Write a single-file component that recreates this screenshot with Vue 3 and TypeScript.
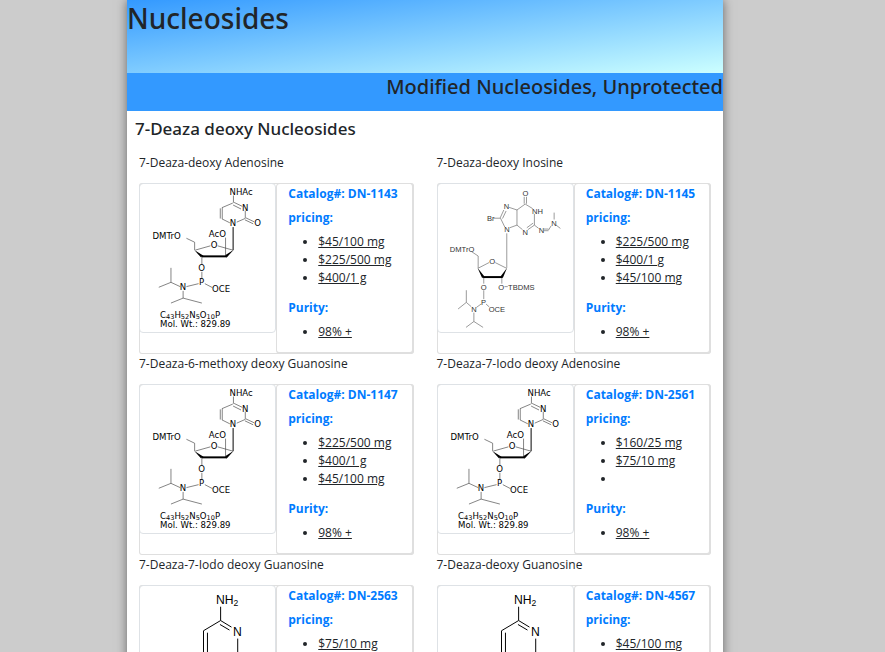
<script setup lang="ts">
type Structure = 'cytidine' | 'guanosine' | 'amine'

interface Product {
  name: string
  catalog: string
  structure: Structure
  prices: string[]
  purity: string
}

const products: Product[] = [
  { name: '7-Deaza-deoxy Adenosine', catalog: 'DN-1143', structure: 'cytidine', prices: ['$45/100 mg', '$225/500 mg', '$400/1 g'], purity: '98% +' },
  { name: '7-Deaza-deoxy Inosine', catalog: 'DN-1145', structure: 'guanosine', prices: ['$225/500 mg', '$400/1 g', '$45/100 mg'], purity: '98% +' },
  { name: '7-Deaza-6-methoxy deoxy Guanosine', catalog: 'DN-1147', structure: 'cytidine', prices: ['$225/500 mg', '$400/1 g', '$45/100 mg'], purity: '98% +' },
  { name: '7-Deaza-7-Iodo deoxy Adenosine', catalog: 'DN-2561', structure: 'cytidine', prices: ['$160/25 mg', '$75/10 mg', ''], purity: '98% +' },
  { name: '7-Deaza-7-Iodo deoxy Guanosine', catalog: 'DN-2563', structure: 'amine', prices: ['$75/10 mg'], purity: '98% +' },
  { name: '7-Deaza-deoxy Guanosine', catalog: 'DN-4567', structure: 'amine', prices: ['$45/100 mg'], purity: '98% +' },
]
</script>

<template>
  <div class="page">
    <main class="sheet">
      <header class="banner"><h1>Nucleosides</h1></header>
      <div class="band"><h2>Modified Nucleosides, Unprotected</h2></div>
      <h3>7-Deaza deoxy Nucleosides</h3>
      <div class="products">
        <article v-for="p in products" :key="p.catalog">
          <p class="name">{{ p.name }}</p>
          <div class="card">
            <div class="picture">
              <svg v-if="p.structure === 'cytidine'" viewBox="27 99 411 450">
                <g class="thin">
                  <path d="M311 134V156M309 157L276 171M313 155L338 167M310 163L334 175M277 171V205M271 173V204M276 205L300 217M321 215L346 204M347 204V180M349 202L374 214M346 208L371 220" />
                  <path d="M287 262V318M168 264L193 276V300M195 300L241 287M263 287L309 300M215 320V344M215 366V388M205 402L168 411M224 402L247 414M149 411L121 398M121 398V354M121 398L84 413M158 424V446M158 446L121 461M158 446L215 461" />
                </g>
                <path class="bond" d="M310 230V300" />
                <path class="bold" d="M215 319H290" />
                <path class="wedge" d="M192 300L212 322L220 317ZM312 299L287 315L290 323Z" />
                <text x="299" y="133">NHAc</text>
                <text x="337" y="180">N</text>
                <text x="300" y="227">N</text>
                <text x="374" y="228">O</text>
                <text x="236" y="260">AcO</text>
                <text x="65" y="267">DMTrO</text>
                <text x="242" y="294">O</text>
                <text x="204" y="363">O</text>
                <text x="206" y="406">P</text>
                <text x="246" y="427">OCE</text>
                <text x="148" y="422">N</text>
                <text x="88" y="505">C<tspan class="sub" dy="3">43</tspan><tspan dy="-3">H</tspan><tspan class="sub" dy="3">52</tspan><tspan dy="-3">N</tspan><tspan class="sub" dy="3">5</tspan><tspan dy="-3">O</tspan><tspan class="sub" dy="3">10</tspan><tspan dy="-3">P</tspan></text>
                <text x="88" y="534">Mol. Wt.: 829.89</text>
              </svg>
              <svg v-else-if="p.structure === 'guanosine'" viewBox="21 99 411 450" class="grey">
                <g class="thin">
                  <path d="M283 138V159M290 138V159M286 160L261 178M286 160L309 174M261 178L237 170M261 178V224M221 178L210 202M228 181L217 204M190 203H211L224 230M239 232L261 224L278 238M294 238L314 224M291 232L310 218M314 190V224L327 234M342 236H357M342 241H357M357 239L365 226M374 207V186M380 224L393 234" />
                  <path d="M230 249V354M122 304L143 318V355L176 338M195 338L229 355M160 383V402M160 422V449M152 464L138 474M167 464L177 473M122 472L107 459V422M107 459L82 479M130 490V517M130 517L106 535M130 517L158 535M215 383V402M223 411H233" />
                </g>
                <path class="bold" d="M158 382H216" />
                <path class="wedge" d="M141 354L155 385L162 380ZM231 354L211 380L218 385Z" />
                <text x="278" y="136">O</text>
                <text x="221" y="176">N</text>
                <text x="307" y="189">NH</text>
                <text x="170" y="211">Br</text>
                <text x="222" y="246">N</text>
                <text x="278" y="254">N</text>
                <text x="327" y="249">N</text>
                <text x="365" y="226">N</text>
                <text x="57" y="307">DMTrO</text>
                <text x="177" y="343">O</text>
                <text x="151" y="420">O</text>
                <text x="204" y="420">O</text>
                <text x="234" y="420">TBDMS</text>
                <text x="152" y="466">P</text>
                <text x="175" y="487">OCE</text>
                <text x="122" y="488">N</text>
              </svg>
              <svg v-else viewBox="57 105 411 450" class="large">
                <path class="bond" d="M302 168V210L250 241V313L302 344M262 247V307M302 210L335 230M300 222L329 239M354 265V313L322 334M354 313L390 334M350 323L384 343M302 373V427" />
                <text x="288" y="160">NH<tspan class="sub" dy="6">2</tspan></text>
                <text x="340" y="256">N</text>
              </svg>
            </div>
            <div class="details">
              <h4>Catalog#: {{ p.catalog }}</h4>
              <h4>pricing:</h4>
              <ul class="prices">
                <li v-for="(price, i) in p.prices" :key="i"><a v-if="price" href="#">{{ price }}</a></li>
              </ul>
              <h4>Purity:</h4>
              <ul>
                <li><a href="#">{{ p.purity }}</a></li>
              </ul>
            </div>
          </div>
        </article>
      </div>
    </main>
  </div>
</template>

<style>
body {
  background: #ccc;
}
</style>

<style scoped>
.page {
  padding: 0 162px 0 127px;
  color: #212529;
  font-family: "Segoe UI", "Open Sans", "Noto Sans", sans-serif;
  font-size: 12px;
  line-height: 18px;
}
.sheet {
  background: #fff;
  box-shadow: 0 0 10px rgba(0, 0, 0, 0.5);
}
h1, h2, h3, h4, p, ul {
  margin: 0;
}
h1, h2, h3 {
  font-family: "Segoe UI", "Noto Sans", "Open Sans", sans-serif;
  font-weight: 500;
}
.banner {
  height: 73px;
  background: linear-gradient(to bottom right, #39f, #cff);
}
h1 {
  font-size: 28px;
  line-height: 36px;
}
.band {
  height: 38px;
  background: #39f;
  text-align: right;
}
h2 {
  font-size: 20px;
  line-height: 28px;
}
h3 {
  padding: 6px 8px 10px;
  font-size: 17px;
  line-height: 24px;
}
.products {
  display: grid;
  grid-template-columns: 1fr 1fr;
  column-gap: 23px;
  padding: 2px 12px 0;
}
.name {
  padding: 1px 0 11px;
}
.card {
  display: grid;
  grid-template-columns: 1fr 1fr;
  align-items: start;
  border-radius: 3px;
  box-shadow: inset 0 0 0 1px #dfdfdf;
}
.picture {
  height: 150px;
  box-sizing: border-box;
  border: 1px solid #dee2e6;
  border-radius: 4px;
}
.picture svg {
  display: block;
  width: 100%;
  height: 100%;
}
.details {
  min-height: 171px;
  box-sizing: border-box;
  padding: 1px 11px 11px;
  border: 1px solid #dfdfdf;
  border-right-width: 2px;
  border-bottom-width: 2px;
  border-radius: 4px;
}
h4 {
  margin-bottom: 6px;
  color: #007bff;
  font-size: 12px;
  line-height: 18px;
  font-weight: 700;
}
ul {
  padding-left: 30px;
}
.prices {
  margin-bottom: 12px;
}
li {
  height: 18px;
}
a {
  color: inherit;
  text-decoration: underline;
}
text {
  fill: #000;
  font-family: "DejaVu Sans", sans-serif;
  font-size: 26px;
}
.sub {
  font-size: 20px;
}
.thin, .bond, .bold {
  fill: none;
  stroke: #000;
}
.thin {
  stroke: #444;
  stroke-width: 2;
}
.bond {
  stroke-width: 3;
}
.bold {
  stroke-width: 6;
}
.grey text {
  fill: #333;
  font-family: "Liberation Sans", sans-serif;
  font-size: 23px;
}
.grey .thin {
  stroke: #666;
}
.large text {
  font-family: "Liberation Sans", sans-serif;
  font-size: 37px;
}
.large .sub {
  font-size: 26px;
}
</style>
